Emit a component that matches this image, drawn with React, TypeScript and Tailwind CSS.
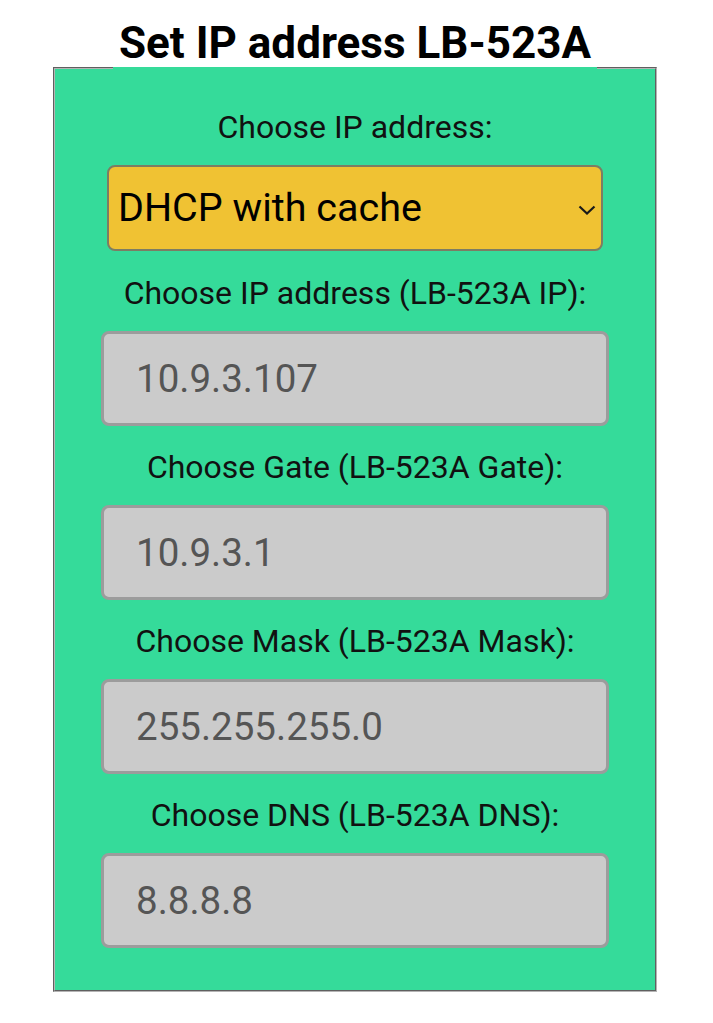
import { useState } from 'react';

const fields = [
  { label: 'Choose IP address (LB-523A IP):', value: '10.9.3.107' },
  { label: 'Choose Gate (LB-523A Gate):', value: '10.9.3.1' },
  { label: 'Choose Mask (LB-523A Mask):', value: '255.255.255.0' },
  { label: 'Choose DNS (LB-523A DNS):', value: '8.8.8.8' },
];

export default function App() {
  const [mode, setMode] = useState('cache');

  return (
    <div className="min-h-[1023px] bg-white font-['Roboto','Liberation_Sans',sans-serif] text-[#111]">
      <fieldset className="ml-[53px] mt-[41px] w-[604px] border-2 [border-style:groove] border-[#b4b4b4] bg-[#35db9a] pt-[13px] pb-[42px] flex flex-col items-center">
        <legend className="mx-auto px-[6px] text-[44px] leading-[54px] font-bold text-black relative -top-[25px]">
          Set IP address LB-523A
        </legend>

        <label className="text-[32px] leading-[38px]">Choose IP address:</label>
        <div className="relative mt-[19px] w-[496px] h-[86px]">
          <select
            value={mode}
            onChange={e => setMode(e.target.value)}
            className="appearance-none w-full h-full rounded-[8px] border-2 border-[#7d7d63] bg-[#f0c233] pl-[9px] text-[39.5px] text-black outline-none"
          >
            <option value="dhcp">DHCP</option>
            <option value="cache">DHCP with cache</option>
            <option value="static">Static</option>
          </select>
          <svg
            className="pointer-events-none absolute right-[7px] top-[40px]"
            width="18"
            height="10"
            viewBox="0 0 18 10"
            fill="none"
          >
            <polyline points="1.5,1.5 9,8.5 16.5,1.5" stroke="#1a1a1a" strokeWidth="2.2" />
          </svg>
        </div>

        {fields.map((f, i) => (
          <div key={i} className={i === 0 ? 'mt-[23px] flex flex-col items-center' : 'mt-[22px] flex flex-col items-center'}>
            <label className="text-[32px] leading-[38px]">{f.label}</label>
            <input
              readOnly
              defaultValue={f.value}
              className="mt-[19px] w-[508px] h-[95px] rounded-[8px] border-[3px] border-[#9c9c9c] bg-[#cbcbcb] pl-[32px] text-[38.5px] text-[#555] outline-none"
            />
          </div>
        ))}
      </fieldset>
    </div>
  );
}
